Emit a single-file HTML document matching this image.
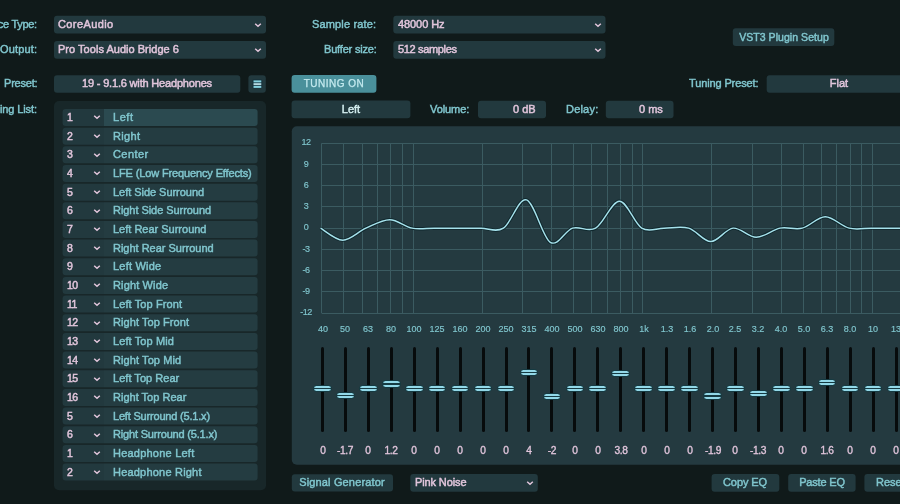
<!DOCTYPE html>
<html><head><meta charset="utf-8"><style>
html,body{margin:0;padding:0;}
body{width:900px;height:504px;overflow:hidden;background:#101a1a;position:relative;font-family:"Liberation Sans",sans-serif;}
.t{position:absolute;white-space:nowrap;-webkit-text-stroke:0.45px currentColor;will-change:transform;}
.b{position:absolute;}
.th{width:18.6px;height:7.4px;box-sizing:border-box;border-radius:3.7px;background:linear-gradient(#92d8e8 0,#92d8e8 39%,#153a42 39%,#153a42 59%,#92d8e8 59%);border:1px solid #153a42;}
</style></head><body>
<svg class="b" style="left:54px;top:15px" width="212" height="19"><rect x="0.00" y="0.70" width="212.00" height="17.70" rx="3" fill="#22393e"/></svg>
<div class="t" style="left:58.0px;top:16.0px;height:17.2px;line-height:17.2px;color:#e2c6dc;font-size:11px;letter-spacing:0.402px;">CoreAudio</div>
<svg class="b" style="left:253.3px;top:19.5px" width="10" height="10"><path d="M2.2 3.7 L5 6.3 L7.8 3.7" fill="none" stroke="#e2c6dc" stroke-width="1.5"/></svg>
<div class="t" style="right:863.2px;top:16.0px;height:17.2px;line-height:17.2px;color:#80c6ce;font-size:11px;letter-spacing:-0.3px;">Device Type:</div>
<svg class="b" style="left:54px;top:41px" width="212" height="18"><rect x="0.00" y="0.00" width="212.00" height="17.80" rx="3" fill="#22393e"/></svg>
<div class="t" style="left:58.3px;top:41.2px;height:17.3px;line-height:17.3px;color:#e2c6dc;font-size:11px;letter-spacing:0.028px;">Pro Tools Audio Bridge 6</div>
<svg class="b" style="left:253.3px;top:44.7px" width="10" height="10"><path d="M2.2 3.7 L5 6.3 L7.8 3.7" fill="none" stroke="#e2c6dc" stroke-width="1.5"/></svg>
<div class="t" style="right:863.0px;top:41.2px;height:17.3px;line-height:17.3px;color:#80c6ce;font-size:11px;letter-spacing:0.154px;">Output:</div>
<div class="t" style="right:523.7px;top:16.0px;height:17.2px;line-height:17.2px;color:#80c6ce;font-size:11px;letter-spacing:0.148px;">Sample rate:</div>
<svg class="b" style="left:393px;top:15px" width="213" height="19"><rect x="0.30" y="0.70" width="212.20" height="17.70" rx="3" fill="#22393e"/></svg>
<div class="t" style="left:397.8px;top:16.0px;height:17.2px;line-height:17.2px;color:#e2c6dc;font-size:11px;letter-spacing:-0.085px;">48000 Hz</div>
<svg class="b" style="left:592.8px;top:19.5px" width="10" height="10"><path d="M2.2 3.7 L5 6.3 L7.8 3.7" fill="none" stroke="#e2c6dc" stroke-width="1.5"/></svg>
<div class="t" style="right:523.7px;top:41.2px;height:17.3px;line-height:17.3px;color:#80c6ce;font-size:11px;letter-spacing:-0.184px;">Buffer size:</div>
<svg class="b" style="left:393px;top:41px" width="213" height="18"><rect x="0.30" y="0.00" width="212.20" height="17.80" rx="3" fill="#22393e"/></svg>
<div class="t" style="left:397.8px;top:41.2px;height:17.3px;line-height:17.3px;color:#e2c6dc;font-size:11px;letter-spacing:-0.338px;">512 samples</div>
<svg class="b" style="left:592.8px;top:44.7px" width="10" height="10"><path d="M2.2 3.7 L5 6.3 L7.8 3.7" fill="none" stroke="#e2c6dc" stroke-width="1.5"/></svg>
<svg class="b" style="left:732px;top:28px" width="103" height="19"><rect x="0.80" y="0.30" width="101.50" height="17.80" rx="3" fill="#22393e"/></svg>
<div class="t" style="left:683.5px;width:200px;text-align:center;top:29.2px;height:17.4px;line-height:17.4px;color:#80c6ce;font-size:10.5px;letter-spacing:0.054px;">VST3 Plugin Setup</div>
<div class="t" style="right:863.0px;top:75.3px;height:17.4px;line-height:17.4px;color:#80c6ce;font-size:11px;letter-spacing:-0.210px;">Preset:</div>
<svg class="b" style="left:54px;top:75px" width="187" height="18"><rect x="0.00" y="0.30" width="186.30" height="17.40" rx="3" fill="#22393e"/></svg>
<div class="t" style="left:47.3px;width:200px;text-align:center;top:75.3px;height:17.4px;line-height:17.4px;color:#e2c6dc;font-size:11px;letter-spacing:-0.178px;">19 - 9.1.6 with Headphones</div>
<svg class="b" style="left:248px;top:75px" width="18" height="18"><rect x="0.40" y="0.30" width="17.40" height="17.40" rx="3" fill="#22393e"/></svg>
<svg class="b" style="left:248px;top:75px" width="18" height="18"><rect x="4.6" y="4.6" width="9.6" height="8.6" rx="1.2" fill="#12303a" opacity="0.9"/><rect x="5.5" y="5.4" width="7.8" height="2" fill="#86d2e0"/><rect x="5.5" y="8.15" width="7.8" height="2" fill="#b4d8e0"/><rect x="5.5" y="10.9" width="7.8" height="2" fill="#86d2e0"/></svg>
<svg class="b" style="left:291px;top:75px" width="86" height="18"><rect x="0.60" y="0.00" width="84.80" height="17.80" rx="3" fill="#4a909b"/></svg>
<div class="t" style="left:233.9px;width:200px;text-align:center;top:75.2px;height:17.6px;line-height:17.6px;color:#c4eaef;font-size:10px;-webkit-text-stroke:0.25px currentColor;letter-spacing:0.511px;">TUNING ON</div>
<div class="t" style="right:142.1px;top:75.3px;height:17.4px;line-height:17.4px;color:#80c6ce;font-size:11px;letter-spacing:-0.126px;">Tuning Preset:</div>
<svg class="b" style="left:766px;top:75px" width="146" height="18"><rect x="0.70" y="0.30" width="145.30" height="17.40" rx="3" fill="#22393e"/></svg>
<div class="t" style="left:739.0px;width:200px;text-align:center;top:75.3px;height:17.4px;line-height:17.4px;color:#e2c6dc;font-size:11px;">Flat</div>
<svg class="b" style="left:291px;top:100px" width="120" height="19"><rect x="0.60" y="0.60" width="118.80" height="17.70" rx="3" fill="#22393e"/></svg>
<div class="t" style="left:251.0px;width:200px;text-align:center;top:101.0px;height:17.2px;line-height:17.2px;color:#d4eef0;font-size:11px;">Left</div>
<div class="t" style="right:430.6px;top:101.4px;height:17.6px;line-height:17.6px;color:#80c6ce;font-size:11px;letter-spacing:-0.075px;">Volume:</div>
<svg class="b" style="left:478px;top:100px" width="68" height="19"><rect x="0.00" y="0.70" width="68.00" height="17.50" rx="3" fill="#22393e"/></svg>
<div class="t" style="right:364.3px;top:101.4px;height:17.6px;line-height:17.6px;color:#e2c6dc;font-size:11px;">0 dB</div>
<div class="t" style="right:302.0px;top:101.4px;height:17.6px;line-height:17.6px;color:#80c6ce;font-size:11px;letter-spacing:0.203px;">Delay:</div>
<svg class="b" style="left:605px;top:100px" width="69" height="19"><rect x="0.80" y="0.70" width="67.70" height="17.50" rx="3" fill="#22393e"/></svg>
<div class="t" style="right:236.8px;top:101.4px;height:17.6px;line-height:17.6px;color:#e2c6dc;font-size:11px;">0 ms</div>
<div class="t" style="right:863.0px;top:100.6px;height:17px;line-height:17px;color:#80c6ce;font-size:11px;letter-spacing:-0.115px;">ing List:</div>
<svg class="b" style="left:54px;top:101px" width="212" height="390"><rect x="0.00" y="0.00" width="212.00" height="389.30" rx="5" fill="#182729"/></svg>
<svg class="b" style="left:0;top:0" width="300" height="504"><path d="M65.60 109.00H104.00H104.00V126.00H65.60A3 3 0 0 1 62.60 123.00V112.00A3 3 0 0 1 65.60 109.00Z" fill="#22393e"/><path d="M104.00 109.00H254.60A3 3 0 0 1 257.60 112.00V123.00A3 3 0 0 1 254.60 126.00H104.00H104.00V109.00Z" fill="#2b4a50"/><path d="M65.60 127.66H104.00H104.00V144.66H65.60A3 3 0 0 1 62.60 141.66V130.66A3 3 0 0 1 65.60 127.66Z" fill="#22393e"/><path d="M104.00 127.66H254.60A3 3 0 0 1 257.60 130.66V141.66A3 3 0 0 1 254.60 144.66H104.00H104.00V127.66Z" fill="#243c41"/><path d="M65.60 146.32H104.00H104.00V163.32H65.60A3 3 0 0 1 62.60 160.32V149.32A3 3 0 0 1 65.60 146.32Z" fill="#22393e"/><path d="M104.00 146.32H254.60A3 3 0 0 1 257.60 149.32V160.32A3 3 0 0 1 254.60 163.32H104.00H104.00V146.32Z" fill="#243c41"/><path d="M65.60 164.98H104.00H104.00V181.98H65.60A3 3 0 0 1 62.60 178.98V167.98A3 3 0 0 1 65.60 164.98Z" fill="#22393e"/><path d="M104.00 164.98H254.60A3 3 0 0 1 257.60 167.98V178.98A3 3 0 0 1 254.60 181.98H104.00H104.00V164.98Z" fill="#243c41"/><path d="M65.60 183.64H104.00H104.00V200.64H65.60A3 3 0 0 1 62.60 197.64V186.64A3 3 0 0 1 65.60 183.64Z" fill="#22393e"/><path d="M104.00 183.64H254.60A3 3 0 0 1 257.60 186.64V197.64A3 3 0 0 1 254.60 200.64H104.00H104.00V183.64Z" fill="#243c41"/><path d="M65.60 202.30H104.00H104.00V219.30H65.60A3 3 0 0 1 62.60 216.30V205.30A3 3 0 0 1 65.60 202.30Z" fill="#22393e"/><path d="M104.00 202.30H254.60A3 3 0 0 1 257.60 205.30V216.30A3 3 0 0 1 254.60 219.30H104.00H104.00V202.30Z" fill="#243c41"/><path d="M65.60 220.96H104.00H104.00V237.96H65.60A3 3 0 0 1 62.60 234.96V223.96A3 3 0 0 1 65.60 220.96Z" fill="#22393e"/><path d="M104.00 220.96H254.60A3 3 0 0 1 257.60 223.96V234.96A3 3 0 0 1 254.60 237.96H104.00H104.00V220.96Z" fill="#243c41"/><path d="M65.60 239.62H104.00H104.00V256.62H65.60A3 3 0 0 1 62.60 253.62V242.62A3 3 0 0 1 65.60 239.62Z" fill="#22393e"/><path d="M104.00 239.62H254.60A3 3 0 0 1 257.60 242.62V253.62A3 3 0 0 1 254.60 256.62H104.00H104.00V239.62Z" fill="#243c41"/><path d="M65.60 258.28H104.00H104.00V275.28H65.60A3 3 0 0 1 62.60 272.28V261.28A3 3 0 0 1 65.60 258.28Z" fill="#22393e"/><path d="M104.00 258.28H254.60A3 3 0 0 1 257.60 261.28V272.28A3 3 0 0 1 254.60 275.28H104.00H104.00V258.28Z" fill="#243c41"/><path d="M65.60 276.94H104.00H104.00V293.94H65.60A3 3 0 0 1 62.60 290.94V279.94A3 3 0 0 1 65.60 276.94Z" fill="#22393e"/><path d="M104.00 276.94H254.60A3 3 0 0 1 257.60 279.94V290.94A3 3 0 0 1 254.60 293.94H104.00H104.00V276.94Z" fill="#243c41"/><path d="M65.60 295.60H104.00H104.00V312.60H65.60A3 3 0 0 1 62.60 309.60V298.60A3 3 0 0 1 65.60 295.60Z" fill="#22393e"/><path d="M104.00 295.60H254.60A3 3 0 0 1 257.60 298.60V309.60A3 3 0 0 1 254.60 312.60H104.00H104.00V295.60Z" fill="#243c41"/><path d="M65.60 314.26H104.00H104.00V331.26H65.60A3 3 0 0 1 62.60 328.26V317.26A3 3 0 0 1 65.60 314.26Z" fill="#22393e"/><path d="M104.00 314.26H254.60A3 3 0 0 1 257.60 317.26V328.26A3 3 0 0 1 254.60 331.26H104.00H104.00V314.26Z" fill="#243c41"/><path d="M65.60 332.92H104.00H104.00V349.92H65.60A3 3 0 0 1 62.60 346.92V335.92A3 3 0 0 1 65.60 332.92Z" fill="#22393e"/><path d="M104.00 332.92H254.60A3 3 0 0 1 257.60 335.92V346.92A3 3 0 0 1 254.60 349.92H104.00H104.00V332.92Z" fill="#243c41"/><path d="M65.60 351.58H104.00H104.00V368.58H65.60A3 3 0 0 1 62.60 365.58V354.58A3 3 0 0 1 65.60 351.58Z" fill="#22393e"/><path d="M104.00 351.58H254.60A3 3 0 0 1 257.60 354.58V365.58A3 3 0 0 1 254.60 368.58H104.00H104.00V351.58Z" fill="#243c41"/><path d="M65.60 370.24H104.00H104.00V387.24H65.60A3 3 0 0 1 62.60 384.24V373.24A3 3 0 0 1 65.60 370.24Z" fill="#22393e"/><path d="M104.00 370.24H254.60A3 3 0 0 1 257.60 373.24V384.24A3 3 0 0 1 254.60 387.24H104.00H104.00V370.24Z" fill="#243c41"/><path d="M65.60 388.90H104.00H104.00V405.90H65.60A3 3 0 0 1 62.60 402.90V391.90A3 3 0 0 1 65.60 388.90Z" fill="#22393e"/><path d="M104.00 388.90H254.60A3 3 0 0 1 257.60 391.90V402.90A3 3 0 0 1 254.60 405.90H104.00H104.00V388.90Z" fill="#243c41"/><path d="M65.60 407.56H104.00H104.00V424.56H65.60A3 3 0 0 1 62.60 421.56V410.56A3 3 0 0 1 65.60 407.56Z" fill="#22393e"/><path d="M104.00 407.56H254.60A3 3 0 0 1 257.60 410.56V421.56A3 3 0 0 1 254.60 424.56H104.00H104.00V407.56Z" fill="#243c41"/><path d="M65.60 426.22H104.00H104.00V443.22H65.60A3 3 0 0 1 62.60 440.22V429.22A3 3 0 0 1 65.60 426.22Z" fill="#22393e"/><path d="M104.00 426.22H254.60A3 3 0 0 1 257.60 429.22V440.22A3 3 0 0 1 254.60 443.22H104.00H104.00V426.22Z" fill="#243c41"/><path d="M65.60 444.88H104.00H104.00V461.88H65.60A3 3 0 0 1 62.60 458.88V447.88A3 3 0 0 1 65.60 444.88Z" fill="#22393e"/><path d="M104.00 444.88H254.60A3 3 0 0 1 257.60 447.88V458.88A3 3 0 0 1 254.60 461.88H104.00H104.00V444.88Z" fill="#243c41"/><path d="M65.60 463.54H104.00H104.00V480.54H65.60A3 3 0 0 1 62.60 477.54V466.54A3 3 0 0 1 65.60 463.54Z" fill="#22393e"/><path d="M104.00 463.54H254.60A3 3 0 0 1 257.60 466.54V477.54A3 3 0 0 1 254.60 480.54H104.00H104.00V463.54Z" fill="#243c41"/></svg>
<div class="t" style="left:66.6px;top:109.0px;height:17px;line-height:17px;color:#e2c6dc;font-size:10.5px;letter-spacing:-0.5px">1</div>
<svg class="b" style="left:92.2px;top:112.4px" width="10" height="10"><path d="M2.2 3.7 L5 6.3 L7.8 3.7" fill="none" stroke="#e2c6dc" stroke-width="1.5"/></svg>
<div class="t" style="left:113.0px;top:109.0px;height:17px;line-height:17px;color:#80c6ce;font-size:11px;letter-spacing:0.547px;">Left</div>
<div class="t" style="left:66.6px;top:127.7px;height:17px;line-height:17px;color:#e2c6dc;font-size:10.5px;letter-spacing:-0.5px">2</div>
<svg class="b" style="left:92.2px;top:131.06px" width="10" height="10"><path d="M2.2 3.7 L5 6.3 L7.8 3.7" fill="none" stroke="#e2c6dc" stroke-width="1.5"/></svg>
<div class="t" style="left:113.0px;top:127.7px;height:17px;line-height:17px;color:#80c6ce;font-size:11px;letter-spacing:0.328px;">Right</div>
<div class="t" style="left:66.6px;top:146.3px;height:17px;line-height:17px;color:#e2c6dc;font-size:10.5px;letter-spacing:-0.5px">3</div>
<svg class="b" style="left:92.2px;top:149.72px" width="10" height="10"><path d="M2.2 3.7 L5 6.3 L7.8 3.7" fill="none" stroke="#e2c6dc" stroke-width="1.5"/></svg>
<div class="t" style="left:113.0px;top:146.3px;height:17px;line-height:17px;color:#80c6ce;font-size:11px;letter-spacing:0.414px;">Center</div>
<div class="t" style="left:66.6px;top:165.0px;height:17px;line-height:17px;color:#e2c6dc;font-size:10.5px;letter-spacing:-0.5px">4</div>
<svg class="b" style="left:92.2px;top:168.38000000000002px" width="10" height="10"><path d="M2.2 3.7 L5 6.3 L7.8 3.7" fill="none" stroke="#e2c6dc" stroke-width="1.5"/></svg>
<div class="t" style="left:113.0px;top:165.0px;height:17px;line-height:17px;color:#80c6ce;font-size:11px;letter-spacing:-0.133px;">LFE (Low Frequency Effects)</div>
<div class="t" style="left:66.6px;top:183.6px;height:17px;line-height:17px;color:#e2c6dc;font-size:10.5px;letter-spacing:-0.5px">5</div>
<svg class="b" style="left:92.2px;top:187.04px" width="10" height="10"><path d="M2.2 3.7 L5 6.3 L7.8 3.7" fill="none" stroke="#e2c6dc" stroke-width="1.5"/></svg>
<div class="t" style="left:113.0px;top:183.6px;height:17px;line-height:17px;color:#80c6ce;font-size:11px;letter-spacing:-0.037px;">Left Side Surround</div>
<div class="t" style="left:66.6px;top:202.3px;height:17px;line-height:17px;color:#e2c6dc;font-size:10.5px;letter-spacing:-0.5px">6</div>
<svg class="b" style="left:92.2px;top:205.70000000000002px" width="10" height="10"><path d="M2.2 3.7 L5 6.3 L7.8 3.7" fill="none" stroke="#e2c6dc" stroke-width="1.5"/></svg>
<div class="t" style="left:113.0px;top:202.3px;height:17px;line-height:17px;color:#80c6ce;font-size:11px;letter-spacing:-0.053px;">Right Side Surround</div>
<div class="t" style="left:66.6px;top:221.0px;height:17px;line-height:17px;color:#e2c6dc;font-size:10.5px;letter-spacing:-0.5px">7</div>
<svg class="b" style="left:92.2px;top:224.36px" width="10" height="10"><path d="M2.2 3.7 L5 6.3 L7.8 3.7" fill="none" stroke="#e2c6dc" stroke-width="1.5"/></svg>
<div class="t" style="left:113.0px;top:221.0px;height:17px;line-height:17px;color:#80c6ce;font-size:11px;letter-spacing:-0.004px;">Left Rear Surround</div>
<div class="t" style="left:66.6px;top:239.6px;height:17px;line-height:17px;color:#e2c6dc;font-size:10.5px;letter-spacing:-0.5px">8</div>
<svg class="b" style="left:92.2px;top:243.02px" width="10" height="10"><path d="M2.2 3.7 L5 6.3 L7.8 3.7" fill="none" stroke="#e2c6dc" stroke-width="1.5"/></svg>
<div class="t" style="left:113.0px;top:239.6px;height:17px;line-height:17px;color:#80c6ce;font-size:11px;letter-spacing:-0.011px;">Right Rear Surround</div>
<div class="t" style="left:66.6px;top:258.3px;height:17px;line-height:17px;color:#e2c6dc;font-size:10.5px;letter-spacing:-0.5px">9</div>
<svg class="b" style="left:92.2px;top:261.67999999999995px" width="10" height="10"><path d="M2.2 3.7 L5 6.3 L7.8 3.7" fill="none" stroke="#e2c6dc" stroke-width="1.5"/></svg>
<div class="t" style="left:113.0px;top:258.3px;height:17px;line-height:17px;color:#80c6ce;font-size:11px;letter-spacing:0.204px;">Left Wide</div>
<div class="t" style="left:66.6px;top:276.9px;height:17px;line-height:17px;color:#e2c6dc;font-size:10.5px;letter-spacing:-0.5px">10</div>
<svg class="b" style="left:92.2px;top:280.34px" width="10" height="10"><path d="M2.2 3.7 L5 6.3 L7.8 3.7" fill="none" stroke="#e2c6dc" stroke-width="1.5"/></svg>
<div class="t" style="left:113.0px;top:276.9px;height:17px;line-height:17px;color:#80c6ce;font-size:11px;letter-spacing:0.134px;">Right Wide</div>
<div class="t" style="left:66.6px;top:295.6px;height:17px;line-height:17px;color:#e2c6dc;font-size:10.5px;letter-spacing:-0.5px">11</div>
<svg class="b" style="left:92.2px;top:299.0px" width="10" height="10"><path d="M2.2 3.7 L5 6.3 L7.8 3.7" fill="none" stroke="#e2c6dc" stroke-width="1.5"/></svg>
<div class="t" style="left:113.0px;top:295.6px;height:17px;line-height:17px;color:#80c6ce;font-size:11px;letter-spacing:0.102px;">Left Top Front</div>
<div class="t" style="left:66.6px;top:314.3px;height:17px;line-height:17px;color:#e2c6dc;font-size:10.5px;letter-spacing:-0.5px">12</div>
<svg class="b" style="left:92.2px;top:317.65999999999997px" width="10" height="10"><path d="M2.2 3.7 L5 6.3 L7.8 3.7" fill="none" stroke="#e2c6dc" stroke-width="1.5"/></svg>
<div class="t" style="left:113.0px;top:314.3px;height:17px;line-height:17px;color:#80c6ce;font-size:11px;letter-spacing:0.070px;">Right Top Front</div>
<div class="t" style="left:66.6px;top:332.9px;height:17px;line-height:17px;color:#e2c6dc;font-size:10.5px;letter-spacing:-0.5px">13</div>
<svg class="b" style="left:92.2px;top:336.32px" width="10" height="10"><path d="M2.2 3.7 L5 6.3 L7.8 3.7" fill="none" stroke="#e2c6dc" stroke-width="1.5"/></svg>
<div class="t" style="left:113.0px;top:332.9px;height:17px;line-height:17px;color:#80c6ce;font-size:11px;letter-spacing:0.106px;">Left Top Mid</div>
<div class="t" style="left:66.6px;top:351.6px;height:17px;line-height:17px;color:#e2c6dc;font-size:10.5px;letter-spacing:-0.5px">14</div>
<svg class="b" style="left:92.2px;top:354.98px" width="10" height="10"><path d="M2.2 3.7 L5 6.3 L7.8 3.7" fill="none" stroke="#e2c6dc" stroke-width="1.5"/></svg>
<div class="t" style="left:113.0px;top:351.6px;height:17px;line-height:17px;color:#80c6ce;font-size:11px;letter-spacing:0.086px;">Right Top Mid</div>
<div class="t" style="left:66.6px;top:370.2px;height:17px;line-height:17px;color:#e2c6dc;font-size:10.5px;letter-spacing:-0.5px">15</div>
<svg class="b" style="left:92.2px;top:373.64px" width="10" height="10"><path d="M2.2 3.7 L5 6.3 L7.8 3.7" fill="none" stroke="#e2c6dc" stroke-width="1.5"/></svg>
<div class="t" style="left:113.0px;top:370.2px;height:17px;line-height:17px;color:#80c6ce;font-size:11px;letter-spacing:0.030px;">Left Top Rear</div>
<div class="t" style="left:66.6px;top:388.9px;height:17px;line-height:17px;color:#e2c6dc;font-size:10.5px;letter-spacing:-0.5px">16</div>
<svg class="b" style="left:92.2px;top:392.29999999999995px" width="10" height="10"><path d="M2.2 3.7 L5 6.3 L7.8 3.7" fill="none" stroke="#e2c6dc" stroke-width="1.5"/></svg>
<div class="t" style="left:113.0px;top:388.9px;height:17px;line-height:17px;color:#80c6ce;font-size:11px;letter-spacing:0.010px;">Right Top Rear</div>
<div class="t" style="left:66.6px;top:407.6px;height:17px;line-height:17px;color:#e2c6dc;font-size:10.5px;letter-spacing:-0.5px">5</div>
<svg class="b" style="left:92.2px;top:410.96px" width="10" height="10"><path d="M2.2 3.7 L5 6.3 L7.8 3.7" fill="none" stroke="#e2c6dc" stroke-width="1.5"/></svg>
<div class="t" style="left:113.0px;top:407.6px;height:17px;line-height:17px;color:#80c6ce;font-size:11px;letter-spacing:-0.190px;">Left Surround (5.1.x)</div>
<div class="t" style="left:66.6px;top:426.2px;height:17px;line-height:17px;color:#e2c6dc;font-size:10.5px;letter-spacing:-0.5px">6</div>
<svg class="b" style="left:92.2px;top:429.62px" width="10" height="10"><path d="M2.2 3.7 L5 6.3 L7.8 3.7" fill="none" stroke="#e2c6dc" stroke-width="1.5"/></svg>
<div class="t" style="left:113.0px;top:426.2px;height:17px;line-height:17px;color:#80c6ce;font-size:11px;letter-spacing:-0.182px;">Right Surround (5.1.x)</div>
<div class="t" style="left:66.6px;top:444.9px;height:17px;line-height:17px;color:#e2c6dc;font-size:10.5px;letter-spacing:-0.5px">1</div>
<svg class="b" style="left:92.2px;top:448.28px" width="10" height="10"><path d="M2.2 3.7 L5 6.3 L7.8 3.7" fill="none" stroke="#e2c6dc" stroke-width="1.5"/></svg>
<div class="t" style="left:113.0px;top:444.9px;height:17px;line-height:17px;color:#80c6ce;font-size:11px;letter-spacing:0.223px;">Headphone Left</div>
<div class="t" style="left:66.6px;top:463.5px;height:17px;line-height:17px;color:#e2c6dc;font-size:10.5px;letter-spacing:-0.5px">2</div>
<svg class="b" style="left:92.2px;top:466.94px" width="10" height="10"><path d="M2.2 3.7 L5 6.3 L7.8 3.7" fill="none" stroke="#e2c6dc" stroke-width="1.5"/></svg>
<div class="t" style="left:113.0px;top:463.5px;height:17px;line-height:17px;color:#80c6ce;font-size:11px;letter-spacing:0.205px;">Headphone Right</div>
<svg class="b" style="left:291px;top:126px" width="639" height="339"><rect x="0.80" y="0.20" width="638.20" height="338.60" rx="5" fill="#243a40"/></svg>
<svg class="b" style="left:0;top:0" width="900" height="504"><path d="M321.6 143.5H930M321.6 164.5H930M321.6 185.5H930M321.6 206.5H930M321.6 228.5H930M321.6 249.5H930M321.6 270.5H930M321.6 291.5H930M321.6 313.5H930M321.5 143.3V313.0M343.5 143.3V313.0M362.5 143.3V313.0M377.5 143.3V313.0M390.5 143.3V313.0M402.5 143.3V313.0M413.5 143.3V313.0M482.5 143.3V313.0M522.5 143.3V313.0M551.5 143.3V313.0M573.5 143.3V313.0M591.5 143.3V313.0M607.5 143.3V313.0M620.5 143.3V313.0M632.5 143.3V313.0M642.5 143.3V313.0M711.5 143.3V313.0M752.5 143.3V313.0M781.5 143.3V313.0M803.5 143.3V313.0M821.5 143.3V313.0M836.5 143.3V313.0M850.5 143.3V313.0M861.5 143.3V313.0M872.5 143.3V313.0" stroke="#3b5b61" stroke-width="1" fill="none"/><path d="M320.60 228.15 C324.31 230.15 335.31 240.17 342.86 240.17 C350.41 240.17 358.10 231.57 365.92 228.15 C373.73 224.73 382.06 219.67 389.75 219.67 C397.43 219.67 404.59 226.74 412.01 228.15 C419.43 229.56 426.45 228.15 434.27 228.15 C442.08 228.15 451.08 228.15 458.89 228.15 C466.71 228.15 473.73 228.15 481.15 228.15 C488.57 228.15 495.86 232.86 503.41 228.15 C510.97 223.44 518.65 197.51 526.47 199.87 C534.28 202.22 542.62 237.58 550.30 242.29 C557.98 247.01 565.01 230.51 572.56 228.15 C580.11 225.79 587.80 232.63 595.62 228.15 C603.43 223.67 611.76 201.28 619.45 201.28 C627.13 201.28 634.29 223.67 641.71 228.15 C649.13 232.63 656.15 228.15 663.97 228.15 C671.78 228.15 680.78 225.91 688.59 228.15 C696.41 230.39 703.43 241.58 710.85 241.58 C718.27 241.58 725.56 228.86 733.11 228.15 C740.67 227.44 748.35 237.34 756.17 237.34 C763.98 237.34 772.32 229.68 780.00 228.15 C787.68 226.62 794.71 230.04 802.26 228.15 C809.81 226.26 817.50 216.84 825.32 216.84 C833.13 216.84 841.46 226.26 849.15 228.15 C856.83 230.04 863.99 228.15 871.41 228.15 C878.83 228.15 885.85 228.15 893.67 228.15 C901.48 228.15 910.48 228.15 918.29 228.15 C926.11 228.15 936.84 228.15 940.55 228.15" stroke="#0d262b" stroke-width="3.4" fill="none" stroke-opacity="0.9"/><path d="M320.60 228.15 C324.31 230.15 335.31 240.17 342.86 240.17 C350.41 240.17 358.10 231.57 365.92 228.15 C373.73 224.73 382.06 219.67 389.75 219.67 C397.43 219.67 404.59 226.74 412.01 228.15 C419.43 229.56 426.45 228.15 434.27 228.15 C442.08 228.15 451.08 228.15 458.89 228.15 C466.71 228.15 473.73 228.15 481.15 228.15 C488.57 228.15 495.86 232.86 503.41 228.15 C510.97 223.44 518.65 197.51 526.47 199.87 C534.28 202.22 542.62 237.58 550.30 242.29 C557.98 247.01 565.01 230.51 572.56 228.15 C580.11 225.79 587.80 232.63 595.62 228.15 C603.43 223.67 611.76 201.28 619.45 201.28 C627.13 201.28 634.29 223.67 641.71 228.15 C649.13 232.63 656.15 228.15 663.97 228.15 C671.78 228.15 680.78 225.91 688.59 228.15 C696.41 230.39 703.43 241.58 710.85 241.58 C718.27 241.58 725.56 228.86 733.11 228.15 C740.67 227.44 748.35 237.34 756.17 237.34 C763.98 237.34 772.32 229.68 780.00 228.15 C787.68 226.62 794.71 230.04 802.26 228.15 C809.81 226.26 817.50 216.84 825.32 216.84 C833.13 216.84 841.46 226.26 849.15 228.15 C856.83 230.04 863.99 228.15 871.41 228.15 C878.83 228.15 885.85 228.15 893.67 228.15 C901.48 228.15 910.48 228.15 918.29 228.15 C926.11 228.15 936.84 228.15 940.55 228.15" stroke="#a6e2ec" stroke-width="1.45" fill="none"/></svg>
<div class="t" style="left:206.4px;width:200px;text-align:center;top:134.4px;height:16px;line-height:16px;color:#80c6ce;font-size:9px;letter-spacing:-0.5px;-webkit-text-stroke:0.15px currentColor;">12</div>
<div class="t" style="left:206.4px;width:200px;text-align:center;top:155.6px;height:16px;line-height:16px;color:#80c6ce;font-size:9px;letter-spacing:-0.5px;-webkit-text-stroke:0.15px currentColor;">9</div>
<div class="t" style="left:206.4px;width:200px;text-align:center;top:176.8px;height:16px;line-height:16px;color:#80c6ce;font-size:9px;letter-spacing:-0.5px;-webkit-text-stroke:0.15px currentColor;">6</div>
<div class="t" style="left:206.4px;width:200px;text-align:center;top:198.0px;height:16px;line-height:16px;color:#80c6ce;font-size:9px;letter-spacing:-0.5px;-webkit-text-stroke:0.15px currentColor;">3</div>
<div class="t" style="left:206.4px;width:200px;text-align:center;top:219.2px;height:16px;line-height:16px;color:#80c6ce;font-size:9px;letter-spacing:-0.5px;-webkit-text-stroke:0.15px currentColor;">0</div>
<div class="t" style="left:206.4px;width:200px;text-align:center;top:240.5px;height:16px;line-height:16px;color:#80c6ce;font-size:9px;letter-spacing:-0.5px;-webkit-text-stroke:0.15px currentColor;">-3</div>
<div class="t" style="left:206.4px;width:200px;text-align:center;top:261.7px;height:16px;line-height:16px;color:#80c6ce;font-size:9px;letter-spacing:-0.5px;-webkit-text-stroke:0.15px currentColor;">-6</div>
<div class="t" style="left:206.4px;width:200px;text-align:center;top:282.9px;height:16px;line-height:16px;color:#80c6ce;font-size:9px;letter-spacing:-0.5px;-webkit-text-stroke:0.15px currentColor;">-9</div>
<div class="t" style="left:206.4px;width:200px;text-align:center;top:304.1px;height:16px;line-height:16px;color:#80c6ce;font-size:9px;letter-spacing:-0.5px;-webkit-text-stroke:0.15px currentColor;">-12</div>
<div class="t" style="left:222.5px;width:200px;text-align:center;top:321.4px;height:16px;line-height:16px;color:#80c6ce;font-size:9px;-webkit-text-stroke:0.15px currentColor;">40</div>
<div class="b" style="left:321.00px;top:346.8px;width:3px;height:84.8px;background:#070b0c;border-radius:1.5px"></div>
<div class="b th" style="left:313.20px;top:384.90px"></div>
<div class="t" style="left:222.5px;width:200px;text-align:center;top:443.0px;height:16px;line-height:16px;color:#e2c6dc;font-size:10.2px;-webkit-text-stroke:0.3px currentColor;letter-spacing:-0.4px;">0</div>
<div class="t" style="left:245.4px;width:200px;text-align:center;top:321.4px;height:16px;line-height:16px;color:#80c6ce;font-size:9px;-webkit-text-stroke:0.15px currentColor;">50</div>
<div class="b" style="left:343.94px;top:346.8px;width:3px;height:84.8px;background:#070b0c;border-radius:1.5px"></div>
<div class="b th" style="left:336.14px;top:391.61px"></div>
<div class="t" style="left:245.4px;width:200px;text-align:center;top:443.0px;height:16px;line-height:16px;color:#e2c6dc;font-size:10.2px;-webkit-text-stroke:0.3px currentColor;letter-spacing:-0.4px;">-1.7</div>
<div class="t" style="left:268.4px;width:200px;text-align:center;top:321.4px;height:16px;line-height:16px;color:#80c6ce;font-size:9px;-webkit-text-stroke:0.15px currentColor;">63</div>
<div class="b" style="left:366.88px;top:346.8px;width:3px;height:84.8px;background:#070b0c;border-radius:1.5px"></div>
<div class="b th" style="left:359.08px;top:384.90px"></div>
<div class="t" style="left:268.4px;width:200px;text-align:center;top:443.0px;height:16px;line-height:16px;color:#e2c6dc;font-size:10.2px;-webkit-text-stroke:0.3px currentColor;letter-spacing:-0.4px;">0</div>
<div class="t" style="left:291.3px;width:200px;text-align:center;top:321.4px;height:16px;line-height:16px;color:#80c6ce;font-size:9px;-webkit-text-stroke:0.15px currentColor;">80</div>
<div class="b" style="left:389.82px;top:346.8px;width:3px;height:84.8px;background:#070b0c;border-radius:1.5px"></div>
<div class="b th" style="left:382.02px;top:380.16px"></div>
<div class="t" style="left:291.3px;width:200px;text-align:center;top:443.0px;height:16px;line-height:16px;color:#e2c6dc;font-size:10.2px;-webkit-text-stroke:0.3px currentColor;letter-spacing:-0.4px;">1.2</div>
<div class="t" style="left:314.3px;width:200px;text-align:center;top:321.4px;height:16px;line-height:16px;color:#80c6ce;font-size:9px;-webkit-text-stroke:0.15px currentColor;">100</div>
<div class="b" style="left:412.76px;top:346.8px;width:3px;height:84.8px;background:#070b0c;border-radius:1.5px"></div>
<div class="b th" style="left:404.96px;top:384.90px"></div>
<div class="t" style="left:314.3px;width:200px;text-align:center;top:443.0px;height:16px;line-height:16px;color:#e2c6dc;font-size:10.2px;-webkit-text-stroke:0.3px currentColor;letter-spacing:-0.4px;">0</div>
<div class="t" style="left:337.2px;width:200px;text-align:center;top:321.4px;height:16px;line-height:16px;color:#80c6ce;font-size:9px;-webkit-text-stroke:0.15px currentColor;">125</div>
<div class="b" style="left:435.70px;top:346.8px;width:3px;height:84.8px;background:#070b0c;border-radius:1.5px"></div>
<div class="b th" style="left:427.90px;top:384.90px"></div>
<div class="t" style="left:337.2px;width:200px;text-align:center;top:443.0px;height:16px;line-height:16px;color:#e2c6dc;font-size:10.2px;-webkit-text-stroke:0.3px currentColor;letter-spacing:-0.4px;">0</div>
<div class="t" style="left:360.1px;width:200px;text-align:center;top:321.4px;height:16px;line-height:16px;color:#80c6ce;font-size:9px;-webkit-text-stroke:0.15px currentColor;">160</div>
<div class="b" style="left:458.64px;top:346.8px;width:3px;height:84.8px;background:#070b0c;border-radius:1.5px"></div>
<div class="b th" style="left:450.84px;top:384.90px"></div>
<div class="t" style="left:360.1px;width:200px;text-align:center;top:443.0px;height:16px;line-height:16px;color:#e2c6dc;font-size:10.2px;-webkit-text-stroke:0.3px currentColor;letter-spacing:-0.4px;">0</div>
<div class="t" style="left:383.1px;width:200px;text-align:center;top:321.4px;height:16px;line-height:16px;color:#80c6ce;font-size:9px;-webkit-text-stroke:0.15px currentColor;">200</div>
<div class="b" style="left:481.58px;top:346.8px;width:3px;height:84.8px;background:#070b0c;border-radius:1.5px"></div>
<div class="b th" style="left:473.78px;top:384.90px"></div>
<div class="t" style="left:383.1px;width:200px;text-align:center;top:443.0px;height:16px;line-height:16px;color:#e2c6dc;font-size:10.2px;-webkit-text-stroke:0.3px currentColor;letter-spacing:-0.4px;">0</div>
<div class="t" style="left:406.0px;width:200px;text-align:center;top:321.4px;height:16px;line-height:16px;color:#80c6ce;font-size:9px;-webkit-text-stroke:0.15px currentColor;">250</div>
<div class="b" style="left:504.52px;top:346.8px;width:3px;height:84.8px;background:#070b0c;border-radius:1.5px"></div>
<div class="b th" style="left:496.72px;top:384.90px"></div>
<div class="t" style="left:406.0px;width:200px;text-align:center;top:443.0px;height:16px;line-height:16px;color:#e2c6dc;font-size:10.2px;-webkit-text-stroke:0.3px currentColor;letter-spacing:-0.4px;">0</div>
<div class="t" style="left:429.0px;width:200px;text-align:center;top:321.4px;height:16px;line-height:16px;color:#80c6ce;font-size:9px;-webkit-text-stroke:0.15px currentColor;">315</div>
<div class="b" style="left:527.46px;top:346.8px;width:3px;height:84.8px;background:#070b0c;border-radius:1.5px"></div>
<div class="b th" style="left:519.66px;top:369.10px"></div>
<div class="t" style="left:429.0px;width:200px;text-align:center;top:443.0px;height:16px;line-height:16px;color:#e2c6dc;font-size:10.2px;-webkit-text-stroke:0.3px currentColor;letter-spacing:-0.4px;">4</div>
<div class="t" style="left:451.9px;width:200px;text-align:center;top:321.4px;height:16px;line-height:16px;color:#80c6ce;font-size:9px;-webkit-text-stroke:0.15px currentColor;">400</div>
<div class="b" style="left:550.40px;top:346.8px;width:3px;height:84.8px;background:#070b0c;border-radius:1.5px"></div>
<div class="b th" style="left:542.60px;top:392.80px"></div>
<div class="t" style="left:451.9px;width:200px;text-align:center;top:443.0px;height:16px;line-height:16px;color:#e2c6dc;font-size:10.2px;-webkit-text-stroke:0.3px currentColor;letter-spacing:-0.4px;">-2</div>
<div class="t" style="left:474.8px;width:200px;text-align:center;top:321.4px;height:16px;line-height:16px;color:#80c6ce;font-size:9px;-webkit-text-stroke:0.15px currentColor;">500</div>
<div class="b" style="left:573.34px;top:346.8px;width:3px;height:84.8px;background:#070b0c;border-radius:1.5px"></div>
<div class="b th" style="left:565.54px;top:384.90px"></div>
<div class="t" style="left:474.8px;width:200px;text-align:center;top:443.0px;height:16px;line-height:16px;color:#e2c6dc;font-size:10.2px;-webkit-text-stroke:0.3px currentColor;letter-spacing:-0.4px;">0</div>
<div class="t" style="left:497.8px;width:200px;text-align:center;top:321.4px;height:16px;line-height:16px;color:#80c6ce;font-size:9px;-webkit-text-stroke:0.15px currentColor;">630</div>
<div class="b" style="left:596.28px;top:346.8px;width:3px;height:84.8px;background:#070b0c;border-radius:1.5px"></div>
<div class="b th" style="left:588.48px;top:384.90px"></div>
<div class="t" style="left:497.8px;width:200px;text-align:center;top:443.0px;height:16px;line-height:16px;color:#e2c6dc;font-size:10.2px;-webkit-text-stroke:0.3px currentColor;letter-spacing:-0.4px;">0</div>
<div class="t" style="left:520.7px;width:200px;text-align:center;top:321.4px;height:16px;line-height:16px;color:#80c6ce;font-size:9px;-webkit-text-stroke:0.15px currentColor;">800</div>
<div class="b" style="left:619.22px;top:346.8px;width:3px;height:84.8px;background:#070b0c;border-radius:1.5px"></div>
<div class="b th" style="left:611.42px;top:369.89px"></div>
<div class="t" style="left:520.7px;width:200px;text-align:center;top:443.0px;height:16px;line-height:16px;color:#e2c6dc;font-size:10.2px;-webkit-text-stroke:0.3px currentColor;letter-spacing:-0.4px;">3.8</div>
<div class="t" style="left:543.7px;width:200px;text-align:center;top:321.4px;height:16px;line-height:16px;color:#80c6ce;font-size:9px;-webkit-text-stroke:0.15px currentColor;">1k</div>
<div class="b" style="left:642.16px;top:346.8px;width:3px;height:84.8px;background:#070b0c;border-radius:1.5px"></div>
<div class="b th" style="left:634.36px;top:384.90px"></div>
<div class="t" style="left:543.7px;width:200px;text-align:center;top:443.0px;height:16px;line-height:16px;color:#e2c6dc;font-size:10.2px;-webkit-text-stroke:0.3px currentColor;letter-spacing:-0.4px;">0</div>
<div class="t" style="left:566.6px;width:200px;text-align:center;top:321.4px;height:16px;line-height:16px;color:#80c6ce;font-size:9px;-webkit-text-stroke:0.15px currentColor;">1.3</div>
<div class="b" style="left:665.10px;top:346.8px;width:3px;height:84.8px;background:#070b0c;border-radius:1.5px"></div>
<div class="b th" style="left:657.30px;top:384.90px"></div>
<div class="t" style="left:566.6px;width:200px;text-align:center;top:443.0px;height:16px;line-height:16px;color:#e2c6dc;font-size:10.2px;-webkit-text-stroke:0.3px currentColor;letter-spacing:-0.4px;">0</div>
<div class="t" style="left:589.5px;width:200px;text-align:center;top:321.4px;height:16px;line-height:16px;color:#80c6ce;font-size:9px;-webkit-text-stroke:0.15px currentColor;">1.6</div>
<div class="b" style="left:688.04px;top:346.8px;width:3px;height:84.8px;background:#070b0c;border-radius:1.5px"></div>
<div class="b th" style="left:680.24px;top:384.90px"></div>
<div class="t" style="left:589.5px;width:200px;text-align:center;top:443.0px;height:16px;line-height:16px;color:#e2c6dc;font-size:10.2px;-webkit-text-stroke:0.3px currentColor;letter-spacing:-0.4px;">0</div>
<div class="t" style="left:612.5px;width:200px;text-align:center;top:321.4px;height:16px;line-height:16px;color:#80c6ce;font-size:9px;-webkit-text-stroke:0.15px currentColor;">2.0</div>
<div class="b" style="left:710.98px;top:346.8px;width:3px;height:84.8px;background:#070b0c;border-radius:1.5px"></div>
<div class="b th" style="left:703.18px;top:392.40px"></div>
<div class="t" style="left:612.5px;width:200px;text-align:center;top:443.0px;height:16px;line-height:16px;color:#e2c6dc;font-size:10.2px;-webkit-text-stroke:0.3px currentColor;letter-spacing:-0.4px;">-1.9</div>
<div class="t" style="left:635.4px;width:200px;text-align:center;top:321.4px;height:16px;line-height:16px;color:#80c6ce;font-size:9px;-webkit-text-stroke:0.15px currentColor;">2.5</div>
<div class="b" style="left:733.92px;top:346.8px;width:3px;height:84.8px;background:#070b0c;border-radius:1.5px"></div>
<div class="b th" style="left:726.12px;top:384.90px"></div>
<div class="t" style="left:635.4px;width:200px;text-align:center;top:443.0px;height:16px;line-height:16px;color:#e2c6dc;font-size:10.2px;-webkit-text-stroke:0.3px currentColor;letter-spacing:-0.4px;">0</div>
<div class="t" style="left:658.4px;width:200px;text-align:center;top:321.4px;height:16px;line-height:16px;color:#80c6ce;font-size:9px;-webkit-text-stroke:0.15px currentColor;">3.2</div>
<div class="b" style="left:756.86px;top:346.8px;width:3px;height:84.8px;background:#070b0c;border-radius:1.5px"></div>
<div class="b th" style="left:749.06px;top:390.03px"></div>
<div class="t" style="left:658.4px;width:200px;text-align:center;top:443.0px;height:16px;line-height:16px;color:#e2c6dc;font-size:10.2px;-webkit-text-stroke:0.3px currentColor;letter-spacing:-0.4px;">-1.3</div>
<div class="t" style="left:681.3px;width:200px;text-align:center;top:321.4px;height:16px;line-height:16px;color:#80c6ce;font-size:9px;-webkit-text-stroke:0.15px currentColor;">4.0</div>
<div class="b" style="left:779.80px;top:346.8px;width:3px;height:84.8px;background:#070b0c;border-radius:1.5px"></div>
<div class="b th" style="left:772.00px;top:384.90px"></div>
<div class="t" style="left:681.3px;width:200px;text-align:center;top:443.0px;height:16px;line-height:16px;color:#e2c6dc;font-size:10.2px;-webkit-text-stroke:0.3px currentColor;letter-spacing:-0.4px;">0</div>
<div class="t" style="left:704.2px;width:200px;text-align:center;top:321.4px;height:16px;line-height:16px;color:#80c6ce;font-size:9px;-webkit-text-stroke:0.15px currentColor;">5.0</div>
<div class="b" style="left:802.74px;top:346.8px;width:3px;height:84.8px;background:#070b0c;border-radius:1.5px"></div>
<div class="b th" style="left:794.94px;top:384.90px"></div>
<div class="t" style="left:704.2px;width:200px;text-align:center;top:443.0px;height:16px;line-height:16px;color:#e2c6dc;font-size:10.2px;-webkit-text-stroke:0.3px currentColor;letter-spacing:-0.4px;">0</div>
<div class="t" style="left:727.2px;width:200px;text-align:center;top:321.4px;height:16px;line-height:16px;color:#80c6ce;font-size:9px;-webkit-text-stroke:0.15px currentColor;">6.3</div>
<div class="b" style="left:825.68px;top:346.8px;width:3px;height:84.8px;background:#070b0c;border-radius:1.5px"></div>
<div class="b th" style="left:817.88px;top:378.58px"></div>
<div class="t" style="left:727.2px;width:200px;text-align:center;top:443.0px;height:16px;line-height:16px;color:#e2c6dc;font-size:10.2px;-webkit-text-stroke:0.3px currentColor;letter-spacing:-0.4px;">1.6</div>
<div class="t" style="left:750.1px;width:200px;text-align:center;top:321.4px;height:16px;line-height:16px;color:#80c6ce;font-size:9px;-webkit-text-stroke:0.15px currentColor;">8.0</div>
<div class="b" style="left:848.62px;top:346.8px;width:3px;height:84.8px;background:#070b0c;border-radius:1.5px"></div>
<div class="b th" style="left:840.82px;top:384.90px"></div>
<div class="t" style="left:750.1px;width:200px;text-align:center;top:443.0px;height:16px;line-height:16px;color:#e2c6dc;font-size:10.2px;-webkit-text-stroke:0.3px currentColor;letter-spacing:-0.4px;">0</div>
<div class="t" style="left:773.1px;width:200px;text-align:center;top:321.4px;height:16px;line-height:16px;color:#80c6ce;font-size:9px;-webkit-text-stroke:0.15px currentColor;">10</div>
<div class="b" style="left:871.56px;top:346.8px;width:3px;height:84.8px;background:#070b0c;border-radius:1.5px"></div>
<div class="b th" style="left:863.76px;top:384.90px"></div>
<div class="t" style="left:773.1px;width:200px;text-align:center;top:443.0px;height:16px;line-height:16px;color:#e2c6dc;font-size:10.2px;-webkit-text-stroke:0.3px currentColor;letter-spacing:-0.4px;">0</div>
<div class="t" style="left:796.0px;width:200px;text-align:center;top:321.4px;height:16px;line-height:16px;color:#80c6ce;font-size:9px;-webkit-text-stroke:0.15px currentColor;">13</div>
<div class="b" style="left:894.50px;top:346.8px;width:3px;height:84.8px;background:#070b0c;border-radius:1.5px"></div>
<div class="b th" style="left:886.70px;top:384.90px"></div>
<div class="t" style="left:796.0px;width:200px;text-align:center;top:443.0px;height:16px;line-height:16px;color:#e2c6dc;font-size:10.2px;-webkit-text-stroke:0.3px currentColor;letter-spacing:-0.4px;">0</div>
<svg class="b" style="left:291px;top:474px" width="102" height="18"><rect x="0.80" y="0.20" width="101.20" height="17.20" rx="3" fill="#22393e"/></svg>
<div class="t" style="left:242.1px;width:200px;text-align:center;top:474.2px;height:17.2px;line-height:17.2px;color:#80c6ce;font-size:11px;letter-spacing:0.149px;">Signal Generator</div>
<svg class="b" style="left:410px;top:473px" width="128" height="19"><rect x="0.30" y="0.90" width="127.50" height="17.80" rx="3" fill="#22393e"/></svg>
<div class="t" style="left:414.6px;top:473.9px;height:17.8px;line-height:17.8px;color:#e2c6dc;font-size:11px;letter-spacing:-0.120px;">Pink Noise</div>
<svg class="b" style="left:524.8px;top:477.8px" width="10" height="10"><path d="M2.2 3.7 L5 6.3 L7.8 3.7" fill="none" stroke="#e2c6dc" stroke-width="1.5"/></svg>
<svg class="b" style="left:711px;top:473px" width="69" height="19"><rect x="0.60" y="0.90" width="67.70" height="17.80" rx="3" fill="#22393e"/></svg>
<div class="t" style="left:645.2px;width:200px;text-align:center;top:473.9px;height:17.8px;line-height:17.8px;color:#80c6ce;font-size:11px;letter-spacing:-0.090px;">Copy EQ</div>
<svg class="b" style="left:788px;top:473px" width="68" height="19"><rect x="0.20" y="0.90" width="67.40" height="17.80" rx="3" fill="#22393e"/></svg>
<div class="t" style="left:721.6px;width:200px;text-align:center;top:473.9px;height:17.8px;line-height:17.8px;color:#80c6ce;font-size:11px;letter-spacing:-0.168px;">Paste EQ</div>
<svg class="b" style="left:864px;top:473px" width="68" height="19"><rect x="0.40" y="0.90" width="67.60" height="17.80" rx="3" fill="#22393e"/></svg>
<div class="t" style="left:876.2px;top:473.9px;height:17.8px;line-height:17.8px;color:#80c6ce;font-size:11px;">Reset EQ</div>
</body></html>
